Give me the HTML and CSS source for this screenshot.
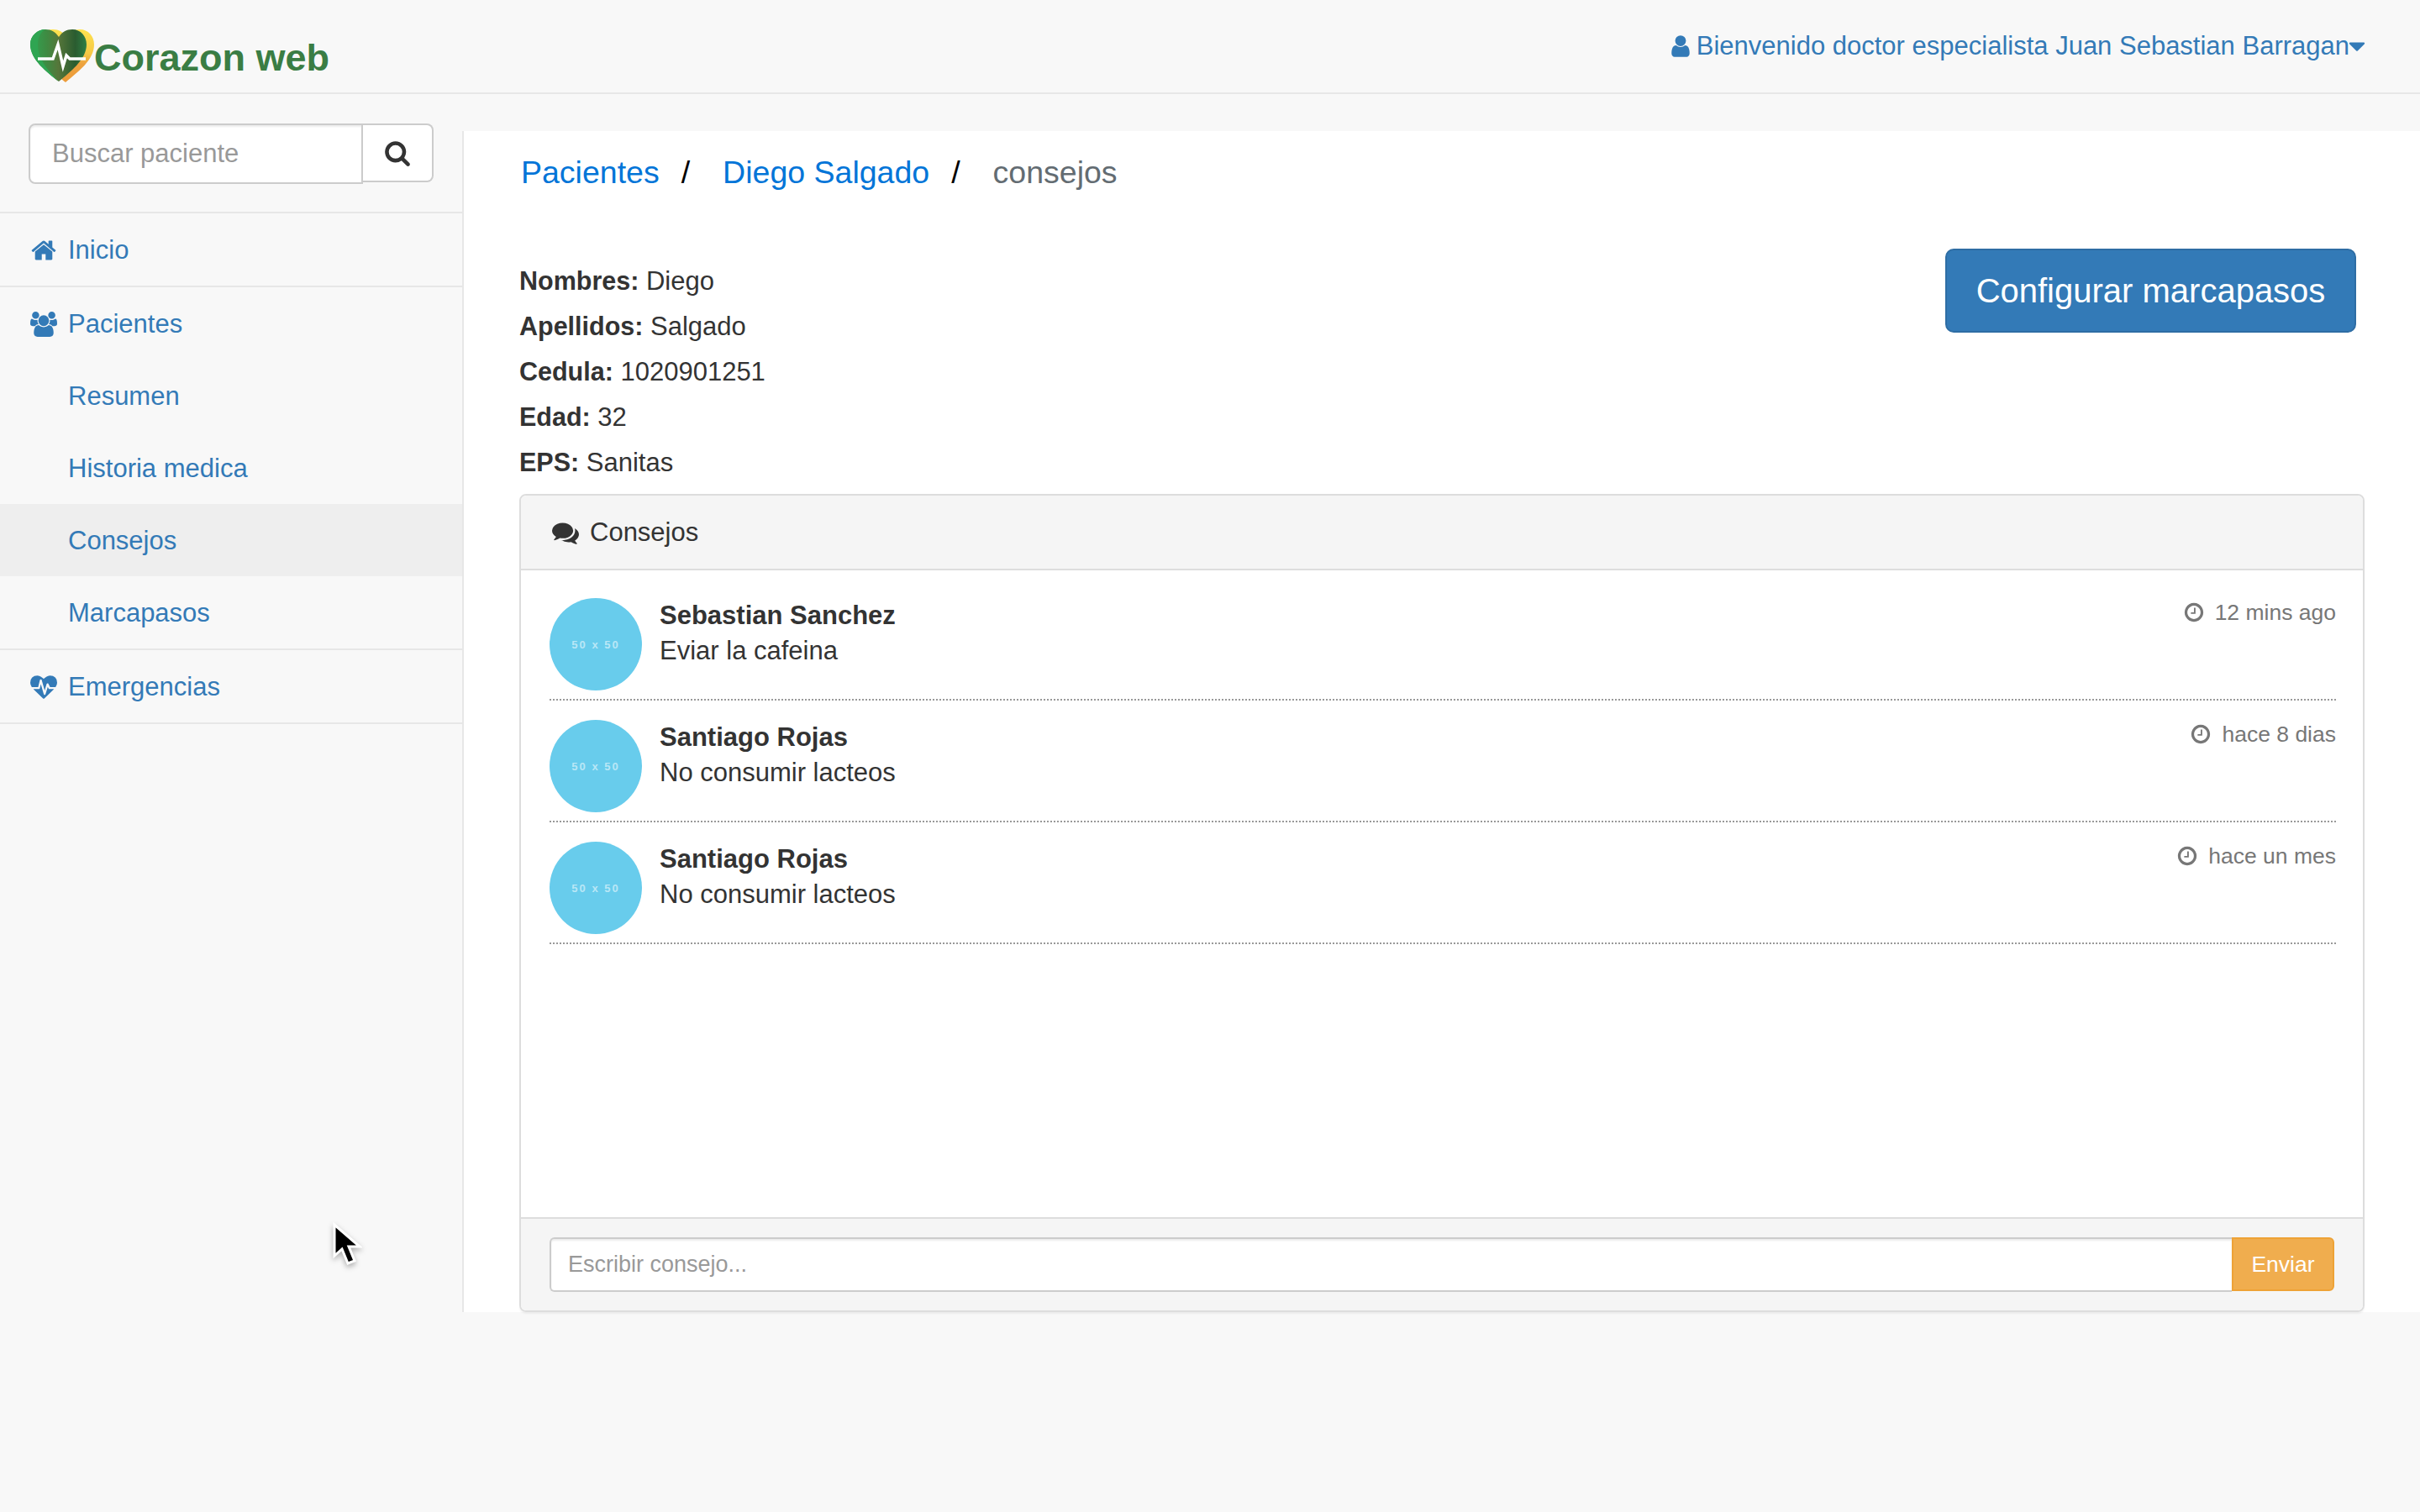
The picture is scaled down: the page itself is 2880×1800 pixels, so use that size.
FILE: index.html
```html
<!doctype html>
<html lang="es">
<head>
  <meta charset="UTF-8">
  <title>Corazon web - consejos</title>
  <link rel="stylesheet" href="styles.css">
</head>
<body>
  <svg class="defs" width="0" height="0">
    <symbol id="i-home" viewBox="0 0 1792 1792"><path d="M1472 992v480q0 26-19 45t-45 19h-384v-384h-256v384h-384q-26 0-45-19t-19-45v-480q0-1 .5-3t.5-3l575-474 575 474q1 2 1 6zm223-69l-62 74q-8 9-21 11h-3q-13 0-21-7l-692-577-692 577q-12 8-24 7-13-2-21-11l-62-74q-8-10-7-23.500t11-21.500l719-599q32-26 76-26t76 26l244 204v-195q0-14 9-23t23-9h192q14 0 23 9t9 23v408l219 182q10 8 11 21.500t-7 23.500z"/></symbol>
    <symbol id="i-search" viewBox="0 0 1792 1792"><path d="M1216 832q0-185-131.500-316.500t-316.500-131.500-316.500 131.500-131.500 316.500 131.500 316.500 316.500 131.500 316.500-131.500 131.500-316.500zm512 832q0 52-38 90t-90 38q-54 0-90-38l-343-342q-179 124-399 124-143 0-273.500-55.500t-225-150-150-225-55.500-273.500 55.500-273.500 150-225 225-150 273.500-55.500 273.500 55.500 225 150 150 225 55.500 273.500q0 220-124 399l343 343q37 37 37 90z"/></symbol>
    <symbol id="i-user" viewBox="0 0 1792 1792"><path d="M1536 1399q0 109-62.500 187t-150.500 78h-854q-88 0-150.500-78t-62.500-187q0-85 8.500-160.500t31.500-152 58.500-131 94-89 134.500-34.500q131 128 313 128t313-128q76 0 134.500 34.500t94 89 58.500 131 31.500 152 8.500 160.500zm-256-887q0 159-112.500 271.500t-271.500 112.500-271.500-112.500-112.500-271.500 112.500-271.500 271.500-112.500 271.500 112.500 112.500 271.500z"/></symbol>
    <symbol id="i-users" viewBox="0 0 1920 1792"><path d="M593 896q-162 5-265 128h-134q-82 0-138-40.500t-56-118.500q0-353 124-353 6 0 43.500 21t97.500 42.500 119 21.500q67 0 133-23-5 37-5 66 0 139 81 256zm1071 637q0 120-73 189.500t-194 69.500h-874q-121 0-194-69.500t-73-189.500q0-53 3.500-103.500t14-109 26.500-108.500 43-97.500 62-81 85.500-53.500 111.500-20q10 0 43 21.500t73 48 107 48 135 21.500 135-21.500 107-48 73-48 43-21.500q61 0 111.500 20t85.500 53.500 62 81 43 97.500 26.500 108.500 14 109 3.500 103.500zm-1024-1277q0 106-75 181t-181 75-181-75-75-181 75-181 181-75 181 75 75 181zm704 384q0 159-112.500 271.500t-271.500 112.500-271.500-112.500-112.500-271.500 112.500-271.500 271.500-112.500 271.500 112.500 112.500 271.500zm576 225q0 78-56 118.500t-138 40.500h-134q-103-123-265-128 81-117 81-256 0-29-5-66 66 23 133 23 59 0 119-21.500t97.500-42.500 43.500-21q124 0 124 353zm-128-609q0 106-75 181t-181 75-181-75-75-181 75-181 181-75 181 75 75 181z"/></symbol>
    <symbol id="i-heartbeat" viewBox="0 0 1792 1792"><path d="M1280 1024h305q-5 6-10 10.500t-9 7.500l-3 4-623 600q-18 18-44 18t-44-18l-624-602q-5-2-21-20h369q22 0 39.500-13.500t22.500-34.500l70-281 190 667q6 20 23 33t39 13q21 0 38-13t23-33l146-485 56 112q18 35 57 35zm512-428q0 145-103 300h-369l-111-221q-8-17-25.500-27t-36.500-8q-45 5-56 46l-129 430-196-686q-6-20-23.500-33t-39.500-13-39 13.500-22 34.500l-116 464h-423q-103-155-103-300 0-220 127-344t351-124q62 0 126.500 21.500t120 58 95.500 68.500 76 68q36-36 76-68t95.500-68.500 120-58 126.500-21.500q224 0 351 124t127 344z"/></symbol>
    <symbol id="i-comments" viewBox="0 0 1792 1792"><path d="M1408 768q0 139-94 257t-256.500 186.500-353.500 68.500q-86 0-176-16-124 88-278 128-36 9-86 16h-3q-11 0-20.500-8t-11.500-21q-1-3-1-6.500t.5-6.500 2-6l2.500-5 3.500-5.500 4-5 4.500-5 4-4.500q5-6 23-25t26-29.500 22.500-29 25-38.500 20.500-44q-124-72-195-177t-71-224q0-139 94-257t256.500-186.500 353.500-68.500 353.500 68.500 256.500 186.500 94 257zm384 256q0 120-71 224.500t-195 176.500q10 24 20.500 44t25 38.500 22.500 29 26 29.500 23 25q1 1 4 4.500t4.500 5 4 5 3.500 5.500l2.500 5 2 6 .5 6.500-1 6.500q-3 14-13 22t-22 7q-50-7-86-16-154-40-278-128-90 16-176 16-271 0-472-132 58 4 88 4 161 0 309-45t264-129q125-92 192-212t67-254q0-77-23-152 129 71 204 178t75 230z"/></symbol>
    <symbol id="i-clock" viewBox="0 0 1792 1792"><path d="M1024 544v448q0 14-9 23t-23 9h-320q-14 0-23-9t-9-23v-64q0-14 9-23t23-9h224v-352q0-14 9-23t23-9h64q14 0 23 9t9 23zm416 352q0-148-73-273t-198-198-273-73-273 73-198 198-73 273 73 273 198 198 273 73 273-73 198-198 73-273zm224 0q0 209-103 385.500t-279.500 279.500-385.500 103-385.500-103-279.500-279.500-103-385.500 103-385.500 279.500-279.500 385.500-103 385.500 103 279.500 279.500 103 385.500z"/></symbol>
    <symbol id="i-caret" viewBox="0 0 1792 1792"><path d="M1408 704q0 26-19 45l-448 448q-19 19-45 19t-45-19l-448-448q-19-19-19-45t19-45 45-19h896q26 0 45 19t19 45z"/></symbol>
  </svg>

  <nav class="navbar">
    <a class="brand" href="#">
      <svg class="brand-logo" viewBox="0 0 76 64">
        <defs>
          <linearGradient id="logoFill" x1="0" x2="1" y1="0" y2="0">
            <stop offset="0" stop-color="#2fa552"/>
            <stop offset="0.3" stop-color="#3f8a42"/>
            <stop offset="0.5" stop-color="#56763a"/>
            <stop offset="0.8" stop-color="#2a5c30"/>
            <stop offset="1" stop-color="#2f7f45"/>
          </linearGradient>
          <linearGradient id="logoBack" x1="0" x2="0" y1="0" y2="1">
            <stop offset="0" stop-color="#fde24f"/>
            <stop offset="0.45" stop-color="#f7c946"/>
            <stop offset="0.65" stop-color="#eda23e"/>
            <stop offset="1" stop-color="#ec9c3a"/>
          </linearGradient>
        </defs>
        <path fill="url(#logoBack)" d="M42 63C29 52 9 37 9 18 9 7 18 0 27 0c7 0 12 3 16 9 4-6 9-9 16-9 10 0 17 8 17 18 0 19-20 33-34 45z"/>
        <path fill="url(#logoFill)" d="M34 62C20 51 0 36 0 18 0 7 9 0 18 0c7 0 12 3 16 9 4-6 9-9 16-9 10 0 17 8 17 18 0 18-20 33-33 44z"/>
        <path fill="#2fa552" d="M34 62C20 51 0 36 0 18 0 7 9 0 18 0c-6 3-9 10-9 18 0 18 13 32 25 44z"/>
        <path fill="none" stroke="#fff" stroke-width="3.500" d="M9 35h18l6-17 6 26 4-13 4 4h19"/>
      </svg>
      <span class="brand-name">Corazon web</span>
    </a>
    <a class="user-menu" href="#">
      <svg class="user-icon"><use href="#i-user"/></svg>
      <span>Bienvenido doctor especialista Juan Sebastian Barragan</span>
      <svg class="caret-icon"><use href="#i-caret"/></svg>
    </a>
  </nav>

  <div class="layout">
    <aside class="sidebar">
      <form class="search">
        <input class="search-input" type="text" placeholder="Buscar paciente">
        <button class="search-btn" type="button"><svg><use href="#i-search"/></svg></button>
      </form>
      <ul class="side-menu">
        <li class="side-item"><a href="#"><svg class="side-icon"><use href="#i-home"/></svg>Inicio</a></li>
        <li class="side-item">
          <a href="#"><svg class="side-icon"><use href="#i-users"/></svg>Pacientes</a>
          <ul class="sub-menu">
            <li><a href="#">Resumen</a></li>
            <li><a href="#">Historia medica</a></li>
            <li class="active"><a href="#">Consejos</a></li>
            <li><a href="#">Marcapasos</a></li>
          </ul>
        </li>
        <li class="side-item"><a href="#"><svg class="side-icon"><use href="#i-heartbeat"/></svg>Emergencias</a></li>
      </ul>
    </aside>

    <main class="content">
      <ol class="breadcrumb">
        <li><a href="#">Pacientes</a></li>
        <li class="sep">/</li>
        <li><a href="#">Diego Salgado</a></li>
        <li class="sep">/</li>
        <li class="current">consejos</li>
      </ol>

      <section class="patient">
        <div class="patient-info">
          <p><strong>Nombres:</strong> Diego</p>
          <p><strong>Apellidos:</strong> Salgado</p>
          <p><strong>Cedula:</strong> 1020901251</p>
          <p><strong>Edad:</strong> 32</p>
          <p><strong>EPS:</strong> Sanitas</p>
        </div>
        <button class="btn-primary" type="button">Configurar marcapasos</button>
      </section>

      <section class="panel">
        <div class="panel-heading">
          <svg class="panel-icon"><use href="#i-comments"/></svg>Consejos
        </div>
        <ul class="chat">
          <li class="chat-row">
            <div class="avatar">50 x 50</div>
            <div class="chat-body">
              <strong>Sebastian Sanchez</strong>
              <p>Eviar la cafeina</p>
            </div>
            <small class="chat-time"><svg><use href="#i-clock"/></svg>12 mins ago</small>
          </li>
          <li class="chat-row">
            <div class="avatar">50 x 50</div>
            <div class="chat-body">
              <strong>Santiago Rojas</strong>
              <p>No consumir lacteos</p>
            </div>
            <small class="chat-time"><svg><use href="#i-clock"/></svg>hace 8 dias</small>
          </li>
          <li class="chat-row">
            <div class="avatar">50 x 50</div>
            <div class="chat-body">
              <strong>Santiago Rojas</strong>
              <p>No consumir lacteos</p>
            </div>
            <small class="chat-time"><svg><use href="#i-clock"/></svg>hace un mes</small>
          </li>
        </ul>
        <div class="panel-footer">
          <input class="chat-input" type="text" placeholder="Escribir consejo...">
          <button class="btn-warning" type="button">Enviar</button>
        </div>
      </section>
    </main>
  </div>

  <svg class="cursor" viewBox="0 0 36 54">
    <path fill="#000" stroke="#fff" stroke-width="3" stroke-linejoin="miter" d="M3 3v37l9-8 7 17 8-3-7-17h13z"/>
  </svg>
</body>
</html>
```
FILE: styles.css
```css
html, body {
  height: 100%;
}

body {
  margin: 0;
  background: #f8f8f8;
  font-family: "Liberation Sans", Arial, sans-serif;
  font-size: 31px;
  color: #333;
  overflow: hidden;
}

a {
  color: #337ab7;
  text-decoration: none;
}

ul, ol {
  list-style: none;
  margin: 0;
  padding: 0;
}

svg {
  fill: currentColor;
}

.defs {
  position: absolute;
}

/* top bar */
.navbar {
  display: flex;
  justify-content: space-between;
  height: 110px;
  border-bottom: 2px solid #e7e7e7;
  padding: 0 66px 0 36px;
}

.brand {
  display: flex;
  align-items: flex-start;
  padding-top: 35px;
}

.brand-logo {
  width: 76px;
  height: 64px;
}

.brand-name {
  font-size: 45px;
  font-weight: bold;
  color: #3a7d44;
  line-height: 64px;
  margin-top: 2px;
}

.user-menu {
  display: flex;
  align-items: center;
  height: 110px;
  font-size: 31px;
}

.user-icon {
  width: 30px;
  height: 30px;
  margin-right: 4px;
}

.caret-icon {
  width: 32px;
  height: 32px;
  margin: 0 -7px;
}

/* layout */
.layout {
  display: flex;
  height: 1450px;
}

.sidebar {
  width: 550px;
  flex: none;
}

.search {
  display: flex;
  padding: 35px 0 0 34px;
  height: 105px;
}

.search-input {
  width: 398px;
  height: 72px;
  box-sizing: border-box;
  border: 2px solid #ccc;
  border-radius: 8px 0 0 8px;
  padding: 0 26px;
  font: 31px "Liberation Sans", Arial, sans-serif;
  color: #555;
  background: #fff;
  box-shadow: inset 0 2px 2px rgba(0,0,0,.075);
}

.search-input::placeholder, .chat-input::placeholder {
  color: #999;
}

.search-btn {
  width: 84px;
  height: 70px;
  box-sizing: border-box;
  border: 2px solid #ccc;
  border-left: 0;
  border-radius: 0 8px 8px 0;
  background: #fff;
  color: #333;
  padding: 0;
}

.search-btn svg {
  width: 32px;
  height: 32px;
  display: block;
  margin: 0 auto;
}

.side-menu {
  border-top: 2px solid #e7e7e7;
}

.side-item {
  border-bottom: 2px solid #e7e7e7;
}

.side-item > a {
  display: flex;
  align-items: center;
  box-sizing: border-box;
  height: 86px;
  padding: 2px 0 0 36px;
}

.side-icon {
  width: 32px;
  height: 32px;
  margin-right: 13px;
  flex: none;
}

.sub-menu li a {
  display: flex;
  align-items: center;
  box-sizing: border-box;
  height: 86px;
  padding: 2px 0 0 81px;
}

.sub-menu .active {
  background: #eee;
}

/* main column */
.content {
  flex: 1;
  margin-top: 44px;
  background: #fff;
  border-left: 2px solid #e7e7e7;
  padding: 0 66px 0 66px;
  display: flex;
  flex-direction: column;
}

.breadcrumb {
  display: flex;
  align-items: center;
  height: 99px;
  padding: 0 0 0 2px;
  font-size: 37.500px;
  color: #000;
}

.breadcrumb a {
  color: #0275d8;
}

.breadcrumb .sep {
  margin: 0 39px 0 26px;
}

.breadcrumb .current {
  color: #636c72;
}

.patient {
  display: flex;
  justify-content: space-between;
  align-items: flex-start;
  margin-top: 41px;
  height: 292px;
}

.patient-info {
  padding-top: 12px;
}

.patient-info p {
  margin: 0;
  line-height: 54px;
  font-size: 31px;
}

.patient-info strong {
  font-size: 30.500px;
  line-height: 0;
}

.btn-primary {
  width: 489px;
  height: 100px;
  margin-right: 10px;
  background: #337ab7;
  border: 2px solid #2e6da4;
  border-radius: 10px;
  color: #fff;
  font: 40px "Liberation Sans", Arial, sans-serif;
  padding: 0;
}

.panel {
  flex: 1;
  display: flex;
  flex-direction: column;
  border: 2px solid #ddd;
  border-radius: 8px;
  box-sizing: border-box;
  box-shadow: 0 2px 2px rgba(0,0,0,.05);
}

.panel-heading {
  display: flex;
  align-items: center;
  height: 87px;
  padding-left: 37px;
  background: #f5f5f5;
  border-bottom: 2px solid #ddd;
  border-radius: 6px 6px 0 0;
  font-size: 31px;
}

.panel-icon {
  width: 32px;
  height: 32px;
  margin-right: 13px;
}

.chat {
  flex: 1;
  padding: 33px 32px 0 34px;
}

.chat-row {
  display: flex;
  height: 120px;
  border-bottom: 2px dotted #999;
  margin-bottom: 23px;
}

.avatar {
  width: 110px;
  height: 110px;
  flex: none;
  border-radius: 50%;
  background: #68ccec;
  color: rgba(255,255,255,.55);
  font-size: 13px;
  font-weight: bold;
  letter-spacing: 2px;
  display: flex;
  align-items: center;
  justify-content: center;
  margin-right: 21px;
}

.chat-body {
  flex: 1;
  line-height: 42px;
}

.chat-body strong {
  display: block;
  font-size: 31px;
}

.chat-body p {
  margin: 0;
}

.chat-time {
  display: flex;
  align-items: center;
  align-self: flex-start;
  height: 42px;
  font-size: 26.500px;
  color: #777;
  margin-top: -4px;
}

.chat-time svg {
  width: 26px;
  height: 26px;
  margin-right: 12px;
}

.panel-footer {
  display: flex;
  height: 111px;
  box-sizing: border-box;
  padding: 22px 34px 0 34px;
  background: #f5f5f5;
  border-top: 2px solid #ddd;
  border-radius: 0 0 6px 6px;
}

.chat-input {
  flex: 1;
  height: 65px;
  box-sizing: border-box;
  border: 2px solid #ccc;
  border-right: 0;
  border-radius: 6px 0 0 6px;
  padding: 0 20px;
  font: 27px "Liberation Sans", Arial, sans-serif;
  background: #fff;
  box-shadow: inset 0 2px 2px rgba(0,0,0,.075);
}

.btn-warning {
  width: 122px;
  height: 64px;
  background: #f0ad4e;
  border: 2px solid #eea236;
  border-radius: 0 6px 6px 0;
  color: #fff;
  font: 26.500px "Liberation Sans", Arial, sans-serif;
  padding: 0;
}

/* mouse pointer caught in the shot */
.cursor {
  position: absolute;
  left: 395px;
  top: 1455px;
  width: 36px;
  height: 54px;
  filter: drop-shadow(0 3px 3px rgba(0,0,0,.3));
}
```
